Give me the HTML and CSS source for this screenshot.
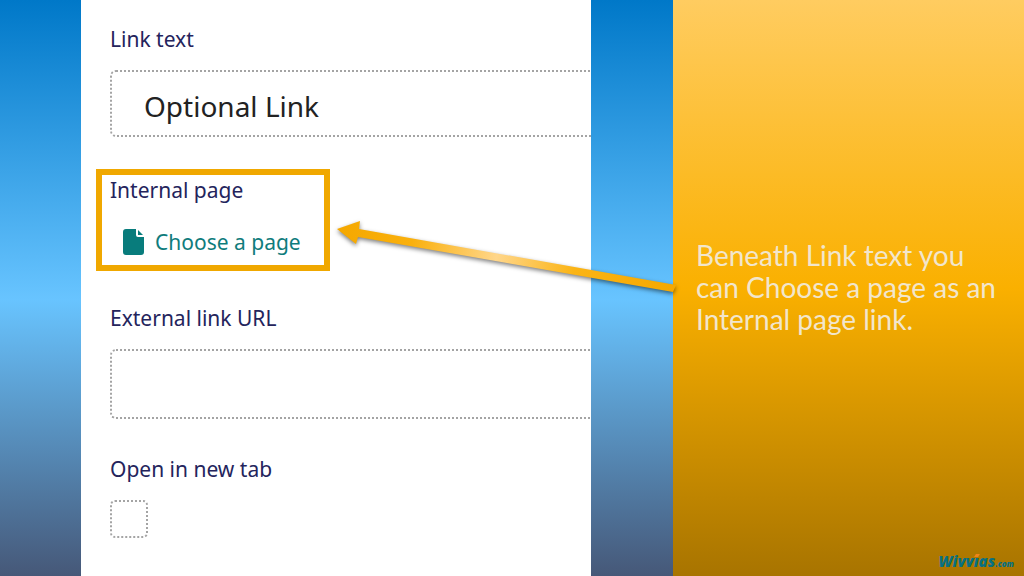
FILE: index.html
```html
<!DOCTYPE html>
<html lang="en">
<head>
    <meta charset="UTF-8">
    <meta name="viewport" content="width=device-width, initial-scale=1.0">
    <title>Internal page link</title>
    <link rel="stylesheet" href="styles.css">
</head>
<body>
    <div class="slide">
        <form class="link-form">
            <div class="field">
                <label for="linkText">Link text</label>
                <input type="text" id="linkText" class="text-box" value="Optional Link">
            </div>

            <div class="field highlight">
                <label for="choosePage">Internal page</label>
                <button type="button" id="choosePage" class="choose-page">
                    <svg class="page-icon" viewBox="0 0 21 26" aria-hidden="true">
                        <path d="M3 0H13V6Q13 8 15 8H21V23Q21 26 18 26H3Q0 26 0 23V3Q0 0 3 0Z"/>
                        <path d="M15 1L20 6H15Z"/>
                    </svg>
                    Choose a page
                </button>
            </div>

            <div class="field">
                <label for="externalUrl">External link URL</label>
                <input type="text" id="externalUrl" class="text-box text-box-tall">
            </div>

            <div class="field">
                <label for="newTab">Open in new tab</label>
                <input type="checkbox" id="newTab" class="check-box">
            </div>
        </form>

        <aside class="caption">
            <p>Beneath Link text you can Choose a page as an Internal page link.</p>
            <a href="#" class="brand">Wivv<span class="brand-i">ı</span>as<small>.com</small></a>
        </aside>

        <!-- Arrow from the caption to the highlighted field -->
        <svg class="arrow" viewBox="0 0 1024 576" preserveAspectRatio="none" aria-hidden="true">
            <defs>
                <linearGradient id="shine" gradientUnits="userSpaceOnUse" x1="337" y1="229" x2="676" y2="290">
                    <stop offset="0" stop-color="#f5a800"/>
                    <stop offset="0.22" stop-color="#fab00c"/>
                    <stop offset="0.47" stop-color="#ffd68a"/>
                    <stop offset="0.7" stop-color="#fbb414"/>
                    <stop offset="1" stop-color="#f5a800"/>
                </linearGradient>
            </defs>
            <path d="M337 229L360 221L359 229L676 285L673 292L358 237L356 244Z" fill="url(#shine)"/>
        </svg>
    </div>
</body>
</html>
```
FILE: styles.css
```css
* {
    box-sizing: border-box;
}

body {
    margin: 0;
    font-family: "Noto Sans", "Open Sans", sans-serif;
}

.slide {
    position: relative;
    display: grid;
    grid-template-columns: 81fr 510fr 82fr 351fr;
    min-height: 100vh;
    background: linear-gradient(#0078c8 0%, #68c4ff 52%, #465878 100%);
}

.link-form {
    grid-column: 2;
    display: flex;
    flex-direction: column;
    gap: 32px;
    padding: 24px 0 32px 29px;
    background: #fff;
}

.field {
    display: flex;
    flex-direction: column;
    align-items: flex-start;
    gap: 16px;
}

.field:last-child {
    padding-top: 3px;
}

.field label {
    font-size: 21px;
    line-height: 30px;
    color: #24245c;
}

/* fields run up to the right edge of the form */
.text-box {
    width: 100%;
    height: 67px;
    padding: 5px 32px 0;
    border: 2px dotted #a4a4a4;
    border-right: 0;
    border-radius: 6px 0 0 6px;
    background: #fff;
    font-family: inherit;
    font-size: 28px;
    color: #222;
}

.text-box-tall {
    height: 70px;
}

.highlight {
    align-self: flex-start;
    gap: 22px;
    margin-left: -14px;
    padding: 0 23px 8px 8px;
    border: 6px solid #f0a800;
}

.choose-page {
    display: flex;
    align-items: center;
    gap: 11px;
    margin-left: 13px;
    padding: 0;
    border: 0;
    background: none;
    font-family: inherit;
    font-size: 21px;
    line-height: 30px;
    color: #0f7c7c;
}

.page-icon {
    width: 21px;
    height: 26px;
    fill: #087c7c;
}

.check-box {
    appearance: none;
    width: 38px;
    height: 38px;
    margin: 0;
    border: 2px dotted #a4a4a4;
    border-radius: 5px;
    background: #fff;
}

.caption {
    grid-column: 4;
    display: grid;
    grid-template-rows: 1fr auto 1fr;
    padding: 0 10px 2px 23px;
    background: linear-gradient(#ffcc60 0%, #fab000 50%, #a87400 100%);
}

.caption p {
    grid-row: 2;
    margin: 0;
    padding-right: 16px;
    font-family: Lato, sans-serif;
    font-size: 28px;
    line-height: 32px;
    color: #f2e6cc;
}

.brand {
    grid-row: 3;
    align-self: end;
    justify-self: end;
    font-family: "Open Sans", sans-serif;
    font-size: 15px;
    font-style: italic;
    font-weight: 800;
    line-height: 20px;
    color: #087080;
    text-decoration: none;
}

.brand-i {
    position: relative;
}

/* orange dot of the second i */
.brand-i::after {
    content: "";
    position: absolute;
    top: 3px;
    right: 0;
    width: 4px;
    height: 3px;
    background: #f08418;
    transform: skewX(-30deg);
}

.brand small {
    font-size: 8px;
}

.arrow {
    position: absolute;
    inset: 0;
    width: 100%;
    height: 100%;
    pointer-events: none;
    filter: drop-shadow(0 2px 2px rgba(0, 0, 0, 0.5));
}
```
